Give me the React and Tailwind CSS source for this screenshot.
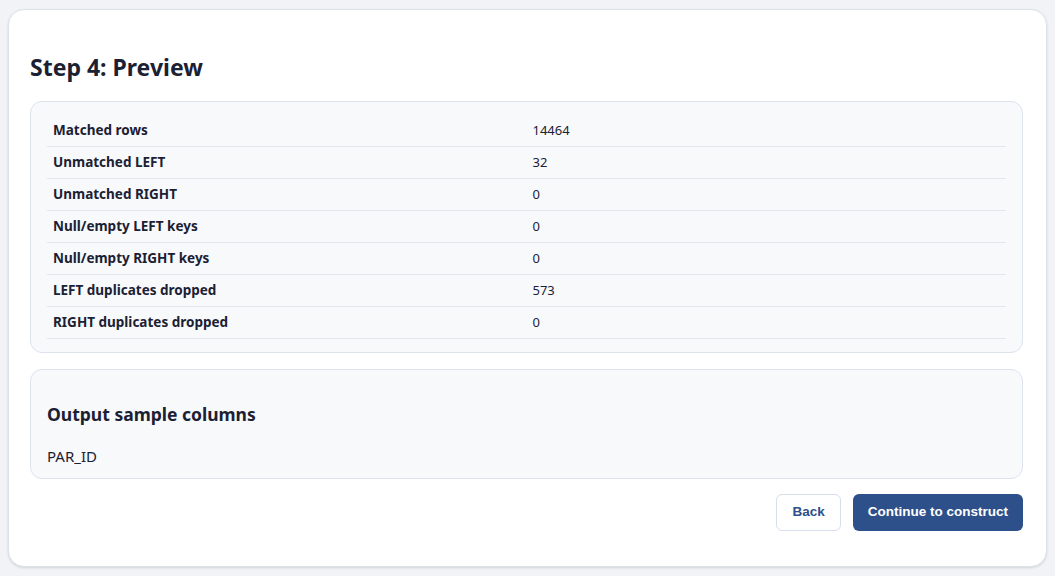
const stats = [
  ["Matched rows", "14464"],
  ["Unmatched LEFT", "32"],
  ["Unmatched RIGHT", "0"],
  ["Null/empty LEFT keys", "0"],
  ["Null/empty RIGHT keys", "0"],
  ["LEFT duplicates dropped", "573"],
  ["RIGHT duplicates dropped", "0"],
];

export default function App() {
  return (
    <div
      className="min-h-screen bg-[#f1f3f7] px-2 pt-[9px] pb-2"
      style={{ fontFamily: '"Segoe UI", "Noto Sans", sans-serif' }}
    >
      <div className="bg-white border border-[#dde3ec] rounded-2xl pl-[21px] pr-[23px] pt-[41px] pb-[35px] shadow-sm">
        <h2 className="text-[23px] leading-8 font-bold text-[#1b2133] mb-[18px]">Step 4: Preview</h2>

        {/* stats */}
        <div className="bg-[#f8f9fb] border border-[#dde3ee] rounded-xl px-4 pt-3 pb-[13px]">
          <table className="w-full table-fixed border-collapse text-[13.5px] text-[#1b2133]">
            <tbody>
              {stats.map(([label, value]) => (
                <tr key={label} className="border-b border-[#e2e6ee] h-8">
                  <td className="px-1.5 pt-px font-bold">{label}</td>
                  <td className="px-1.5 pt-px font-normal text-[13px]">{value}</td>
                </tr>
              ))}
            </tbody>
          </table>
        </div>

        {/* sample columns */}
        <div className="mt-4 bg-[#f8f9fb] border border-[#dde3ee] rounded-xl px-4 pt-[30px] pb-[11px]">
          <h3 className="text-[17.5px] leading-7 font-bold text-[#1b2133] mb-[17px]">Output sample columns</h3>
          <div className="text-[15px] leading-[22px] text-[#1b2133]">PAR_ID</div>
        </div>

        <div className="mt-[15px] flex justify-end gap-3">
          <button
            className="h-[37px] px-[15px] rounded-md border border-[#d6dfec] bg-white text-[#2d4f8a] text-[13.5px] font-bold"
            style={{ fontFamily: '"Liberation Sans", Arial, sans-serif' }}
          >
            Back
          </button>
          <button
            className="h-[37px] px-[15px] rounded-md bg-[#2d4f8a] text-white text-[13.5px] font-bold"
            style={{ fontFamily: '"Liberation Sans", Arial, sans-serif' }}
          >
            Continue to construct
          </button>
        </div>
      </div>
    </div>
  );
}
